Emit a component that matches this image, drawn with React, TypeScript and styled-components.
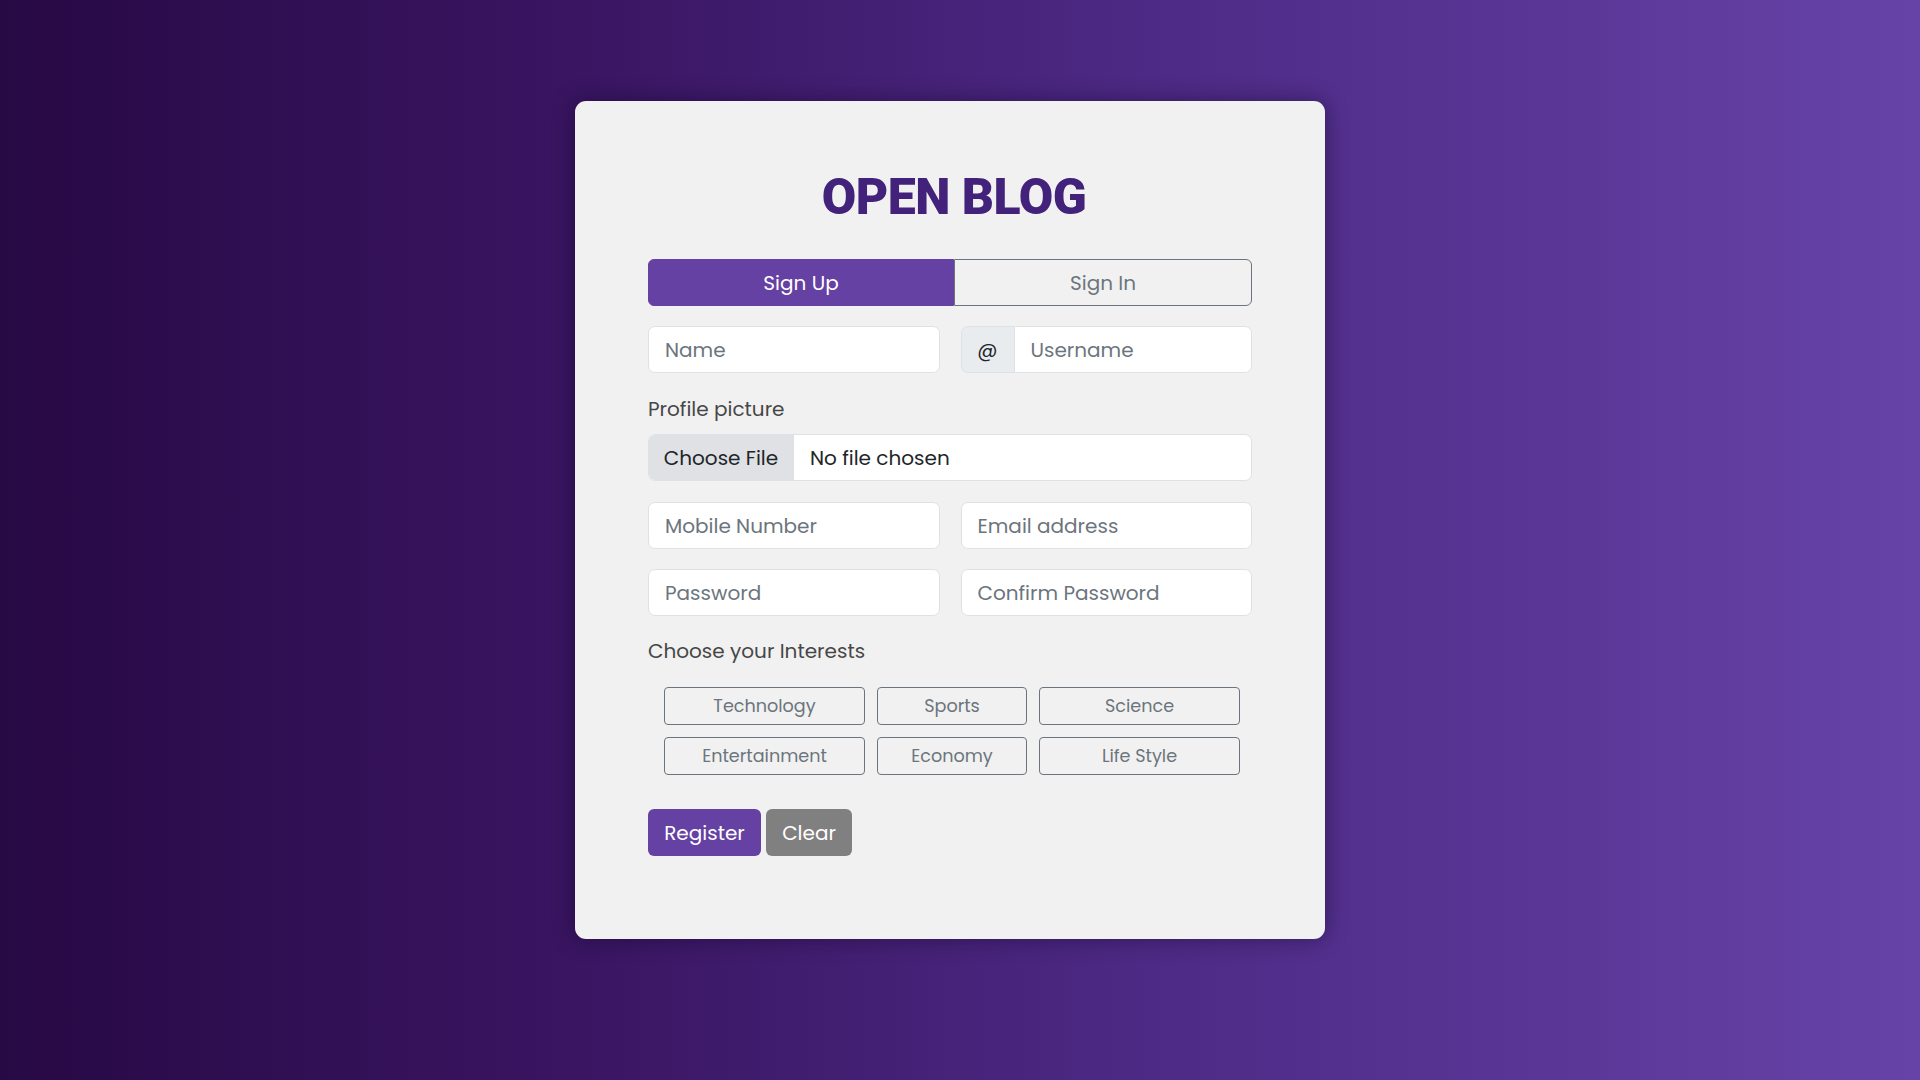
import React from "react";
import styled, { createGlobalStyle } from "styled-components";

const GlobalStyle = createGlobalStyle`
  * { box-sizing: border-box; }
  html, body { margin: 0; padding: 0; }
  body {
    font-family: "Poppins", "Open Sans", "Noto Sans", sans-serif;
    background: linear-gradient(90deg, #270944 0%, #3a1562 30%, #4d2a85 60%, #6643a7 100%);
    min-height: 100vh;
  }
`;

const Page = styled.div`
  min-height: 100vh;
  display: flex;
  justify-content: center;
  align-items: flex-start;
  padding: 101px 20px 0 0;
`;

const Card = styled.div`
  width: 750px;
  background: #f1f1f1;
  border-radius: 11px;
  box-shadow: 0 0 22px rgba(10, 0, 30, 0.45);
  padding: 66px 73px 83px;
  display: flex;
  flex-direction: column;
`;

const Title = styled.h1`
  margin: 0;
  text-align: center;
  font-family: Roboto, "Liberation Sans", sans-serif;
  font-weight: 900;
  font-size: 50px;
  line-height: 60px;
  color: #42227a;
  letter-spacing: -0.5px;
  padding-left: 8px;
`;

const Tabs = styled.div`
  margin-top: 32px;
  display: grid;
  grid-template-columns: 306fr 298fr;
  height: 47px;
`;

const Tab = styled.button<{ $active?: boolean }>`
  font-family: inherit;
  font-size: 20px;
  border: 1px solid ${(p) => (p.$active ? "#6541a3" : "#6c757d")};
  background: ${(p) => (p.$active ? "#6541a3" : "transparent")};
  color: ${(p) => (p.$active ? "#ffffff" : "#6c757d")};
  border-radius: ${(p) => (p.$active ? "6px 0 0 6px" : "0 6px 6px 0")};
  display: flex;
  align-items: center;
  justify-content: center;
  padding: 0;
  cursor: pointer;
`;

const Row = styled.div<{ $mt: number }>`
  margin-top: ${(p) => p.$mt}px;
  display: grid;
  grid-template-columns: 1fr 1fr;
  column-gap: 21px;
`;

const Input = styled.input`
  width: 100%;
  height: 47px;
  border: 1px solid #dee2e6;
  border-radius: 7px;
  background: #ffffff;
  padding: 0 16px;
  font-family: inherit;
  font-size: 20px;
  color: #212529;
  outline: none;
  &::placeholder { color: #6c757d; }
`;

const Group = styled.div`
  display: flex;
  height: 47px;
`;

const Addon = styled.span`
  width: 53px;
  flex: none;
  display: flex;
  align-items: center;
  justify-content: center;
  background: #e9ecef;
  border: 1px solid #dee2e6;
  border-right: none;
  border-radius: 7px 0 0 7px;
  font-size: 20px;
  color: #212529;
`;

const GroupInput = styled(Input)`
  border-radius: 0 7px 7px 0;
  flex: 1;
`;

const Label = styled.div<{ $mt: number }>`
  margin-top: ${(p) => p.$mt}px;
  font-size: 20px;
  line-height: 30px;
  color: #474747;
`;

const FileBox = styled.label`
  margin-top: 10px;
  display: flex;
  height: 47px;
  border: 1px solid #dee2e6;
  border-radius: 7px;
  background: #ffffff;
  overflow: hidden;
  cursor: pointer;
`;

const FileButton = styled.span`
  width: 145px;
  flex: none;
  display: flex;
  align-items: center;
  justify-content: center;
  background: #dfe1e4;
  border-right: 1px solid #dee2e6;
  font-size: 20px;
  color: #212529;
`;

const FileText = styled.span`
  display: flex;
  align-items: center;
  padding-left: 16px;
  font-size: 20px;
  color: #212529;
`;

const Interests = styled.div`
  margin-top: 21px;
  margin-left: 16px;
  display: grid;
  grid-template-columns: 201px 150px 201px;
  column-gap: 12px;
  row-gap: 12px;
`;

const Chip = styled.button`
  height: 38px;
  border: 1px solid #6c757d;
  border-radius: 4px;
  background: transparent;
  color: #6c757d;
  font-family: inherit;
  font-size: 17.6px;
  padding: 0;
  cursor: pointer;
`;

const Actions = styled.div`
  margin-top: 34px;
  display: flex;
  gap: 5px;
`;

const ActionButton = styled.button<{ $variant: "primary" | "gray"; $w: number }>`
  width: ${(p) => p.$w}px;
  height: 47px;
  border: none;
  border-radius: 6px;
  background: ${(p) => (p.$variant === "primary" ? "#6541a3" : "#808080")};
  color: #ffffff;
  font-family: inherit;
  font-size: 20px;
  padding: 0;
  cursor: pointer;
`;

const interests = ["Technology", "Sports", "Science", "Entertainment", "Economy", "Life Style"];

export default function App() {
  return (
    <>
      <GlobalStyle />
      <Page>
        <Card>
          <Title>OPEN BLOG</Title>
          <Tabs>
            <Tab $active>Sign Up</Tab>
            <Tab>Sign In</Tab>
          </Tabs>
          <Row $mt={20}>
            <Input placeholder="Name" />
            <Group>
              <Addon>@</Addon>
              <GroupInput placeholder="Username" />
            </Group>
          </Row>
          <Label $mt={21}>Profile picture</Label>
          <FileBox>
            <FileButton>Choose File</FileButton>
            <FileText>No file chosen</FileText>
          </FileBox>
          <Row $mt={21}>
            <Input placeholder="Mobile Number" />
            <Input placeholder="Email address" />
          </Row>
          <Row $mt={20}>
            <Input type="password" placeholder="Password" />
            <Input type="password" placeholder="Confirm Password" />
          </Row>
          <Label $mt={20}>Choose your Interests</Label>
          <Interests>
            {interests.map((i) => (
              <Chip key={i}>{i}</Chip>
            ))}
          </Interests>
          <Actions>
            <ActionButton $variant="primary" $w={113}>Register</ActionButton>
            <ActionButton $variant="gray" $w={86}>Clear</ActionButton>
          </Actions>
        </Card>
      </Page>
    </>
  );
}
